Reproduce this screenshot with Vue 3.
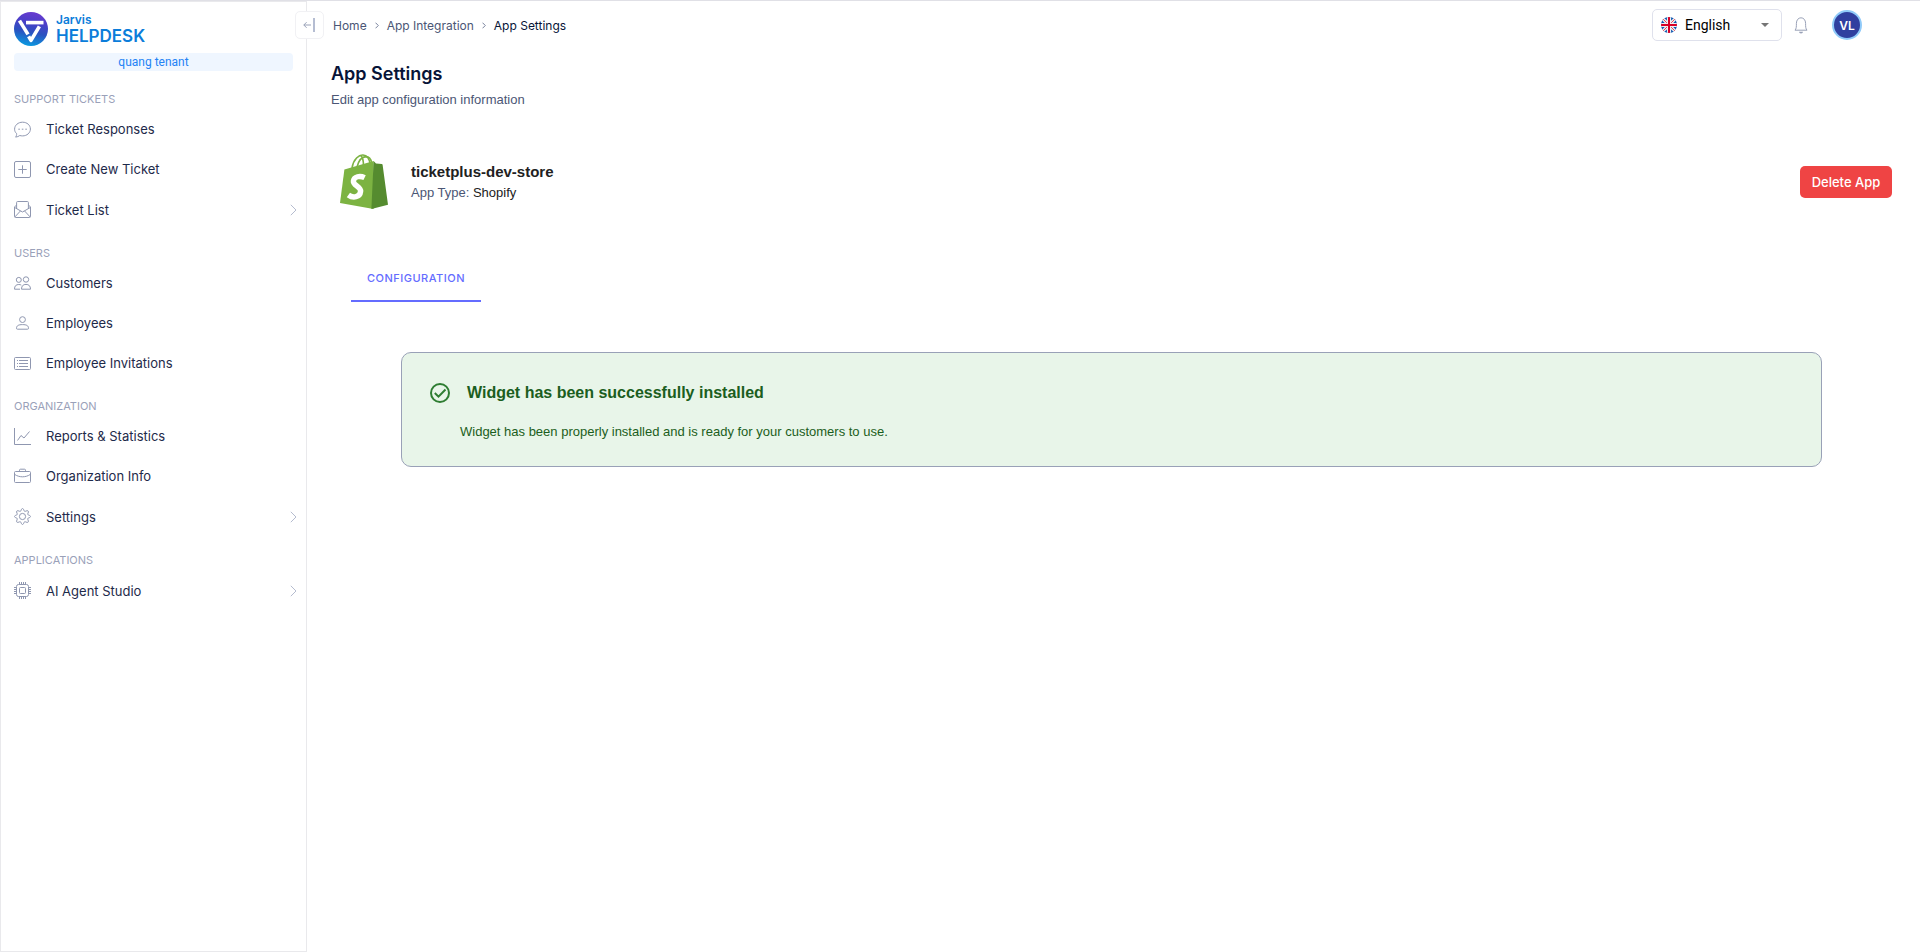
<template>
    <div class="layout">
        <!-- Sidebar -->
        <aside class="sidebar">
            <a class="brand" href="#">
                <svg class="brand-logo" viewBox="0 0 34 34" aria-hidden="true">
                    <defs>
                        <linearGradient id="brandBg" x1="0.6" y1="0" x2="0.4" y2="1">
                            <stop offset="0" stop-color="#6a3bd0" />
                            <stop offset="0.3" stop-color="#4b3fc8" />
                            <stop offset="0.6" stop-color="#2a52c0" />
                            <stop offset="1" stop-color="#0a9be0" />
                        </linearGradient>
                    </defs>
                    <circle cx="17" cy="17" r="17" fill="url(#brandBg)" />
                    <g fill="none" stroke="#fff" stroke-width="3.6">
                        <path d="M5.5 8.6 14 22.4" />
                        <path d="M12 10.6H29.5" />
                        <path d="M25.4 14.4 17 28.4 14.6 24.4" stroke-linejoin="round" />
                    </g>
                </svg>
                <span class="brand-text">
                    <span class="brand-top">Jarvis</span>
                    <span class="brand-name">HELPDESK</span>
                </span>
            </a>
            <div class="tenant">quang tenant</div>

            <nav>
                <section v-for="group in menu" :key="group.title" class="group">
                    <h2 class="group-title">{{ group.title }}</h2>
                    <a
                        v-for="item in group.items"
                        :key="item.label"
                        class="item"
                        :class="{ 'has-children': item.children }"
                        href="#"
                    >
                        <svg class="item-icon" viewBox="0 0 17 17" aria-hidden="true">
                            <path v-for="d in icons[item.icon]" :key="d" :d="d" />
                        </svg>
                        <span class="item-label">{{ item.label }}</span>
                        <svg v-if="item.children" class="item-arrow" viewBox="0 0 7 12" aria-hidden="true">
                            <path d="M.8.8 6 6 .8 11.2" />
                        </svg>
                    </a>
                </section>
            </nav>

            <button class="collapse" type="button" aria-label="Collapse menu">
                <svg viewBox="0 0 14 14" aria-hidden="true">
                    <path d="M8 7H.8M3.600 4.200.8 7l2.800 2.800" />
                    <path class="collapse-bar" d="M11 0v14" />
                </svg>
            </button>
        </aside>

        <div class="main">
            <header class="topbar">
                <nav class="breadcrumb" aria-label="Breadcrumb">
                    <template v-for="crumb in crumbs" :key="crumb">
                        <a href="#">{{ crumb }}</a>
                        <svg viewBox="0 0 4 7" aria-hidden="true"><path d="M.5.7 3.3 3.5.5 6.3" /></svg>
                    </template>
                    <span class="current">App Settings</span>
                </nav>

                <div class="tools">
                    <div class="language">
                        <svg class="flag" viewBox="0 0 16 16" aria-hidden="true">
                            <defs>
                                <clipPath id="flagClip"><circle cx="8" cy="8" r="8" /></clipPath>
                            </defs>
                            <g clip-path="url(#flagClip)">
                                <path fill="#0f56b0" d="M0 0h16v16H0z" />
                                <path stroke="#f0f0f0" stroke-width="3.2" d="m0 0 16 16M16 0 0 16" />
                                <path stroke="#e2445c" stroke-width="1" d="m0 0 16 16M16 0 0 16" />
                                <path stroke="#f0f0f0" stroke-width="4.2" d="M8 0v16M0 8h16" />
                                <path stroke="#d80027" stroke-width="2" d="M8 0v16M0 8h16" />
                            </g>
                        </svg>
                        <select v-model="language" aria-label="Language">
                            <option>English</option>
                            <option>Tiếng Việt</option>
                        </select>
                        <svg class="caret" viewBox="0 0 8 4" aria-hidden="true"><path d="M0 0h8L4 4z" /></svg>
                    </div>
                    <button class="bell" type="button" aria-label="Notifications">
                        <svg viewBox="0 0 14 17" aria-hidden="true">
                            <path d="M1 13.2C2.4 11.6 2.4 9.8 2.4 6.4 2.4 3 4.4.8 7 .8s4.6 2.2 4.6 5.6c0 3.4 0 5.2 1.4 6.8z" />
                            <path class="bell-clapper" d="M5 14.8h4a2 1.6 0 0 1-4 0z" />
                        </svg>
                    </button>
                    <button class="avatar" type="button" aria-label="Account">VL</button>
                </div>
            </header>

            <main class="content">
                <h1>App Settings</h1>
                <p class="subtitle">Edit app configuration information</p>

                <div class="app-head">
                    <svg class="app-logo" viewBox="0 0 48 55" aria-hidden="true">
                        <g fill="none" stroke="#7cb342" stroke-width="1.6">
                            <path d="M12 14C13.500 5 19 .8 23 1c5 .3 6.500 5 7 9" />
                            <path d="M17 13C18.500 7 22 2.800 26 2.600c4 0 5 3 5.500 6" />
                            <path d="M23.500 12C23.500 7 23 3 20.500 1.400" />
                        </g>
                        <path fill="#7cb342" d="M4.400 15.400 33.600 7v48L0 49z" />
                        <path fill="#558b2f" d="M33.600 7 36 9.400l5.800.6c.4 0 .7.300.8.700L48 50.800 31.400 55z" />
                        <path
                            fill="none"
                            stroke="#fff"
                            stroke-width="5.400"
                            d="M24.600 23.600C20 21.400 14 22.400 13.400 27c-.5 4.600 7.800 5.400 7.200 10.400C20 43.400 13 44.400 8.400 41"
                        />
                    </svg>
                    <div class="app-info">
                        <div class="app-name">ticketplus-dev-store</div>
                        <div class="app-type">App Type: <span>Shopify</span></div>
                    </div>
                    <button class="delete" type="button">Delete App</button>
                </div>

                <div class="tabs" role="tablist">
                    <button class="tab" type="button" role="tab" aria-selected="true">CONFIGURATION</button>
                </div>

                <div class="notice" role="status">
                    <div class="notice-head">
                        <svg viewBox="0 0 20 20" aria-hidden="true">
                            <circle cx="10" cy="10" r="9" />
                            <path d="m4.800 10 3.700 3.700 7-7.200" />
                        </svg>
                        <h3>Widget has been successfully installed</h3>
                    </div>
                    <p>Widget has been properly installed and is ready for your customers to use.</p>
                </div>
            </main>
        </div>
    </div>
</template>

<script setup>
import { ref } from 'vue';

const language = ref('English');

const crumbs = ['Home', 'App Integration'];

const menu = [
    {
        title: 'SUPPORT TICKETS',
        items: [
            { label: 'Ticket Responses', icon: 'chat' },
            { label: 'Create New Ticket', icon: 'plus' },
            { label: 'Ticket List', icon: 'mail', children: true }
        ]
    },
    {
        title: 'USERS',
        items: [
            { label: 'Customers', icon: 'users' },
            { label: 'Employees', icon: 'user' },
            { label: 'Employee Invitations', icon: 'list' }
        ]
    },
    {
        title: 'ORGANIZATION',
        items: [
            { label: 'Reports & Statistics', icon: 'chart' },
            { label: 'Organization Info', icon: 'briefcase' },
            { label: 'Settings', icon: 'gear', children: true }
        ]
    },
    {
        title: 'APPLICATIONS',
        items: [{ label: 'AI Agent Studio', icon: 'chip', children: true }]
    }
];

// Stroke paths on a 17x17 grid
const icons = {
    chat: [
        'M2.6 12.6C1.200 11.300.600 9.800.600 8.200.600 4.200 4.100 1.200 8.600 1.200s7.800 3 7.800 6.800-3.400 6.900-7.800 6.900c-1 0-1.900-.1-2.800-.4-1.200.9-2.600 1.400-4.200 1.600.7-1 1.200-2.200 1-3.500z',
        'M4.300 8.200h1.600M7.800 8.200h1.600M11.300 8.200h1.600'
    ],
    plus: [
        'M2 .5h13A1.500 1.500 0 0 1 16.500 2v13a1.500 1.500 0 0 1-1.500 1.500H2A1.500 1.500 0 0 1 .5 15V2A1.500 1.500 0 0 1 2 .5z',
        'M8.500 4.300v8.400M4.300 8.500h8.400'
    ],
    mail: [
        'M2.600 8V1.500a1 1 0 0 1 1-1h9.800a1 1 0 0 1 1 1V8',
        'M2.600 4.200.5 5.800v9.700a1 1 0 0 0 1 1h14a1 1 0 0 0 1-1V5.800l-2.100-1.600',
        'M.7 6.500 8.500 11l7.800-4.500M.8 16l5.700-6.100M16.200 16l-5.700-6.100'
    ],
    users: [
        'M4.800 2.400a2.500 2.500 0 1 0 0 5 2.500 2.500 0 0 0 0-5z',
        'M12 1.800a2.700 2.700 0 1 0 0 5.400 2.700 2.700 0 0 0 0-5.400z',
        'M6 14.200H.5c0-3.300 1.600-4.700 4.300-4.700 1 0 1.800.2 2.500.6',
        'M7.500 14.200c0-3.300 1.700-4.800 4.500-4.800s4.500 1.500 4.500 4.800z'
    ],
    user: [
        'M8.500 1.700a2.900 2.900 0 1 0 0 5.800 2.900 2.900 0 0 0 0-5.800z',
        'M2.500 13.300c0-2.700 2-3.700 6-3.700s6 1 6 3.700c0 .6-.3.900-.9.900H3.400c-.6 0-.9-.3-.9-.9z'
    ],
    list: [
        'M1.500 2.500h14a1 1 0 0 1 1 1v10a1 1 0 0 1-1 1h-14a1 1 0 0 1-1-1v-10a1 1 0 0 1 1-1z',
        'M5 5.500h9M5 8.500h9M5 11.500h9M3 5.500h1M3 8.500h1M3 11.500h1'
    ],
    chart: ['M.5 0v16.500H17', 'M3.500 12.500 7 7.500l3 2.500 5.500-6.500'],
    briefcase: [
        'M1.500 3.500h14a1 1 0 0 1 1 1v9a1 1 0 0 1-1 1h-14a1 1 0 0 1-1-1v-9a1 1 0 0 1 1-1z',
        'M5.500 3.500V2.200a1 1 0 0 1 1-1h4a1 1 0 0 1 1 1v1.300',
        'M.5 6.300C3 8 5.500 8.800 8.500 8.800s5.500-.8 8-2.500'
    ],
    gear: [
        'M8.500 5.400a3.100 3.100 0 1 0 0 6.200 3.100 3.100 0 0 0 0-6.200z',
        'M7.300 2c.3-2 2.100-2 2.400 0 .3 1.200 1.300 1.700 2.400 1 1.700-1 3 .3 2 2-.7 1-.2 2.100.9 2.300 2 .3 2 2.100 0 2.400-1.100.2-1.600 1.300-.9 2.400 1 1.700-.3 3-2 2-1.100-.7-2.100-.2-2.400.9-.3 2-2.100 2-2.400 0-.3-1.100-1.300-1.600-2.400-.9-1.700 1-3-.3-2-2 .7-1.100.2-2.200-.9-2.400-2-.3-2-2.100 0-2.400 1.100-.2 1.600-1.300.9-2.300-1-1.700.3-3 2-2C6 3.700 7 3.200 7.300 2z'
    ],
    chip: [
        'M4.500 2.500h8a2 2 0 0 1 2 2v8a2 2 0 0 1-2 2h-8a2 2 0 0 1-2-2v-8a2 2 0 0 1 2-2z',
        'M6.500 5.500h4a1 1 0 0 1 1 1v4a1 1 0 0 1-1 1h-4a1 1 0 0 1-1-1v-4a1 1 0 0 1 1-1z',
        'M5.500 0v2.500M7.500 0v2.500M9.500 0v2.500M11.500 0v2.500M5.500 14.500V17M7.500 14.500V17M9.500 14.500V17M11.500 14.500V17',
        'M0 5.500h2.500M0 7.500h2.500M0 9.500h2.500M0 11.500h2.500M14.500 5.500H17M14.500 7.500H17M14.500 9.500H17M14.500 11.500H17'
    ]
};
</script>

<style>
body {
    background: #fff;
}
</style>

<style scoped>
* {
    box-sizing: border-box;
}

a {
    color: inherit;
    text-decoration: none;
}

h1,
h2,
h3,
p {
    margin: 0;
}

button,
select {
    font-family: inherit;
    cursor: pointer;
}

svg {
    display: block;
    flex-shrink: 0;
}

.layout {
    display: flex;
    min-height: 100vh;
    border-top: 1px solid #e0e0e6;
    font-family: Inter, "Liberation Sans", sans-serif;
    font-size: 13px;
    color: #1e2a4a;
}

/* Sidebar */
.sidebar {
    position: relative;
    flex: 0 0 307px;
    padding: 10px 13px;
    border: 1px solid #e9e9ec;
}

.brand {
    display: flex;
    align-items: center;
    gap: 8px;
    height: 34px;
    color: #0b7dda;
}

.brand-logo {
    width: 34px;
    height: 34px;
}

.brand-text {
    display: flex;
    flex-direction: column;
    font-weight: 600;
}

.brand-top {
    font-size: 12px;
    line-height: 14px;
}

.brand-name {
    font-size: 17px;
    line-height: 18px;
}

.tenant {
    margin-top: 7px;
    border-radius: 4px;
    background: #eff6ff;
    color: #2483f5;
    font-family: Roboto, sans-serif;
    font-size: 12px;
    line-height: 18px;
    text-align: center;
}

.sidebar nav {
    padding-top: 18px;
}

.group {
    margin-bottom: 13px;
}

.group-title {
    color: #9aa1b9;
    font-size: 11px;
    font-weight: 400;
    line-height: 20px;
}

.item {
    display: flex;
    align-items: center;
    gap: 15px;
    height: 40px;
}

.item.has-children {
    height: 41px;
}

.item-icon {
    width: 17px;
    height: 17px;
    fill: none;
    stroke: #8f97b0;
}

.item-label {
    flex: 1;
}

.item-arrow {
    width: 7px;
    height: 12px;
    margin-right: -4px;
    fill: none;
    stroke: #b5bccf;
}

.collapse {
    position: absolute;
    top: 9px;
    right: -18px;
    display: grid;
    place-items: center;
    width: 29px;
    height: 28px;
    padding: 0;
    border: 1px solid #f1f1f4;
    border-radius: 5px;
    background: #fff;
}

.collapse svg {
    width: 14px;
    height: 14px;
    fill: none;
    stroke: #99a1b7;
}

.collapse .collapse-bar {
    stroke: #b5bdd2;
    stroke-width: 2;
}

/* Main area */
.main {
    flex: 1;
    min-width: 0;
}

.topbar {
    display: flex;
    align-items: center;
    justify-content: space-between;
    height: 48px;
    padding: 0 58px 0 26px;
}

.breadcrumb {
    display: flex;
    align-items: center;
    gap: 8px;
    color: #4b5675;
    font-size: 12px;
}

.breadcrumb svg {
    width: 4px;
    height: 7px;
    fill: none;
    stroke: #78829d;
}

.breadcrumb .current {
    color: #071437;
}

.tools {
    display: flex;
    align-items: center;
    gap: 12px;
}

.language {
    display: flex;
    align-items: center;
    width: 130px;
    height: 32px;
    padding: 0 12px 0 8px;
    border: 1px solid #dfe1ec;
    border-radius: 5px;
}

.flag {
    width: 16px;
    height: 16px;
}

.language select {
    flex: 1;
    min-width: 0;
    height: 30px;
    padding: 0 8px;
    border: 0;
    appearance: none;
    background: transparent;
    color: #000;
    font-family: Roboto, sans-serif;
    font-size: 14px;
}

.caret {
    width: 8px;
    height: 4px;
    fill: #757575;
}

.bell {
    padding: 0;
    border: 0;
    background: none;
}

.bell svg {
    width: 14px;
    height: 17px;
    fill: none;
    stroke: #99a1b7;
}

.bell .bell-clapper {
    fill: #99a1b7;
    stroke: none;
}

.avatar {
    width: 30px;
    height: 30px;
    margin-left: 12px;
    padding: 0;
    border: 2px solid #90caf9;
    border-radius: 50%;
    background: #303f9f;
    color: #fff;
    font-size: 12px;
    font-weight: 600;
}

.content {
    padding: 12px 28px 24px 24px;
}

h1 {
    color: #071437;
    font-size: 18px;
    font-weight: 600;
    line-height: 26px;
}

.subtitle {
    margin-top: 3px;
    color: #4b5675;
    font-family: "Liberation Sans", Arial, sans-serif;
    line-height: 20px;
}

.app-head {
    display: flex;
    align-items: center;
    margin-top: 44px;
    padding-left: 9px;
}

.app-logo {
    width: 48px;
    height: 55px;
}

.app-info {
    flex: 1;
    margin-left: 23px;
    font-family: "Liberation Sans", Arial, sans-serif;
}

.app-name {
    color: #212121;
    font-size: 15px;
    font-weight: 700;
    line-height: 22px;
}

.app-type {
    color: #4b5675;
    line-height: 20px;
}

.app-type span {
    color: #212121;
}

.delete {
    width: 92px;
    height: 32px;
    padding: 0;
    border: 0;
    border-radius: 5px;
    background: #ef4444;
    color: #fff;
    font-size: 13px;
    font-weight: 500;
}

.tabs {
    display: flex;
    margin-top: 45px;
    padding-left: 20px;
}

.tab {
    width: 130px;
    height: 48px;
    padding: 2px 0 0;
    border: 0;
    border-bottom: 2px solid #646cff;
    background: none;
    color: #646cff;
    font-size: 11px;
    font-weight: 500;
    letter-spacing: 0.5px;
}

.notice {
    margin: 50px 70px 0;
    padding: 24px 28px;
    border: 1px solid #99a1b7;
    border-radius: 10px;
    background: #e8f5e9;
    color: #1b5e20;
    font-family: "Liberation Sans", Arial, sans-serif;
}

.notice-head {
    display: flex;
    align-items: center;
    gap: 17px;
}

.notice-head svg {
    width: 20px;
    height: 20px;
    fill: none;
    stroke: #2e7d32;
    stroke-width: 2;
}

.notice h3 {
    font-size: 16px;
    font-weight: 700;
    line-height: 32px;
}

.notice p {
    margin-top: 12px;
    padding-left: 30px;
    line-height: 21px;
}
</style>
